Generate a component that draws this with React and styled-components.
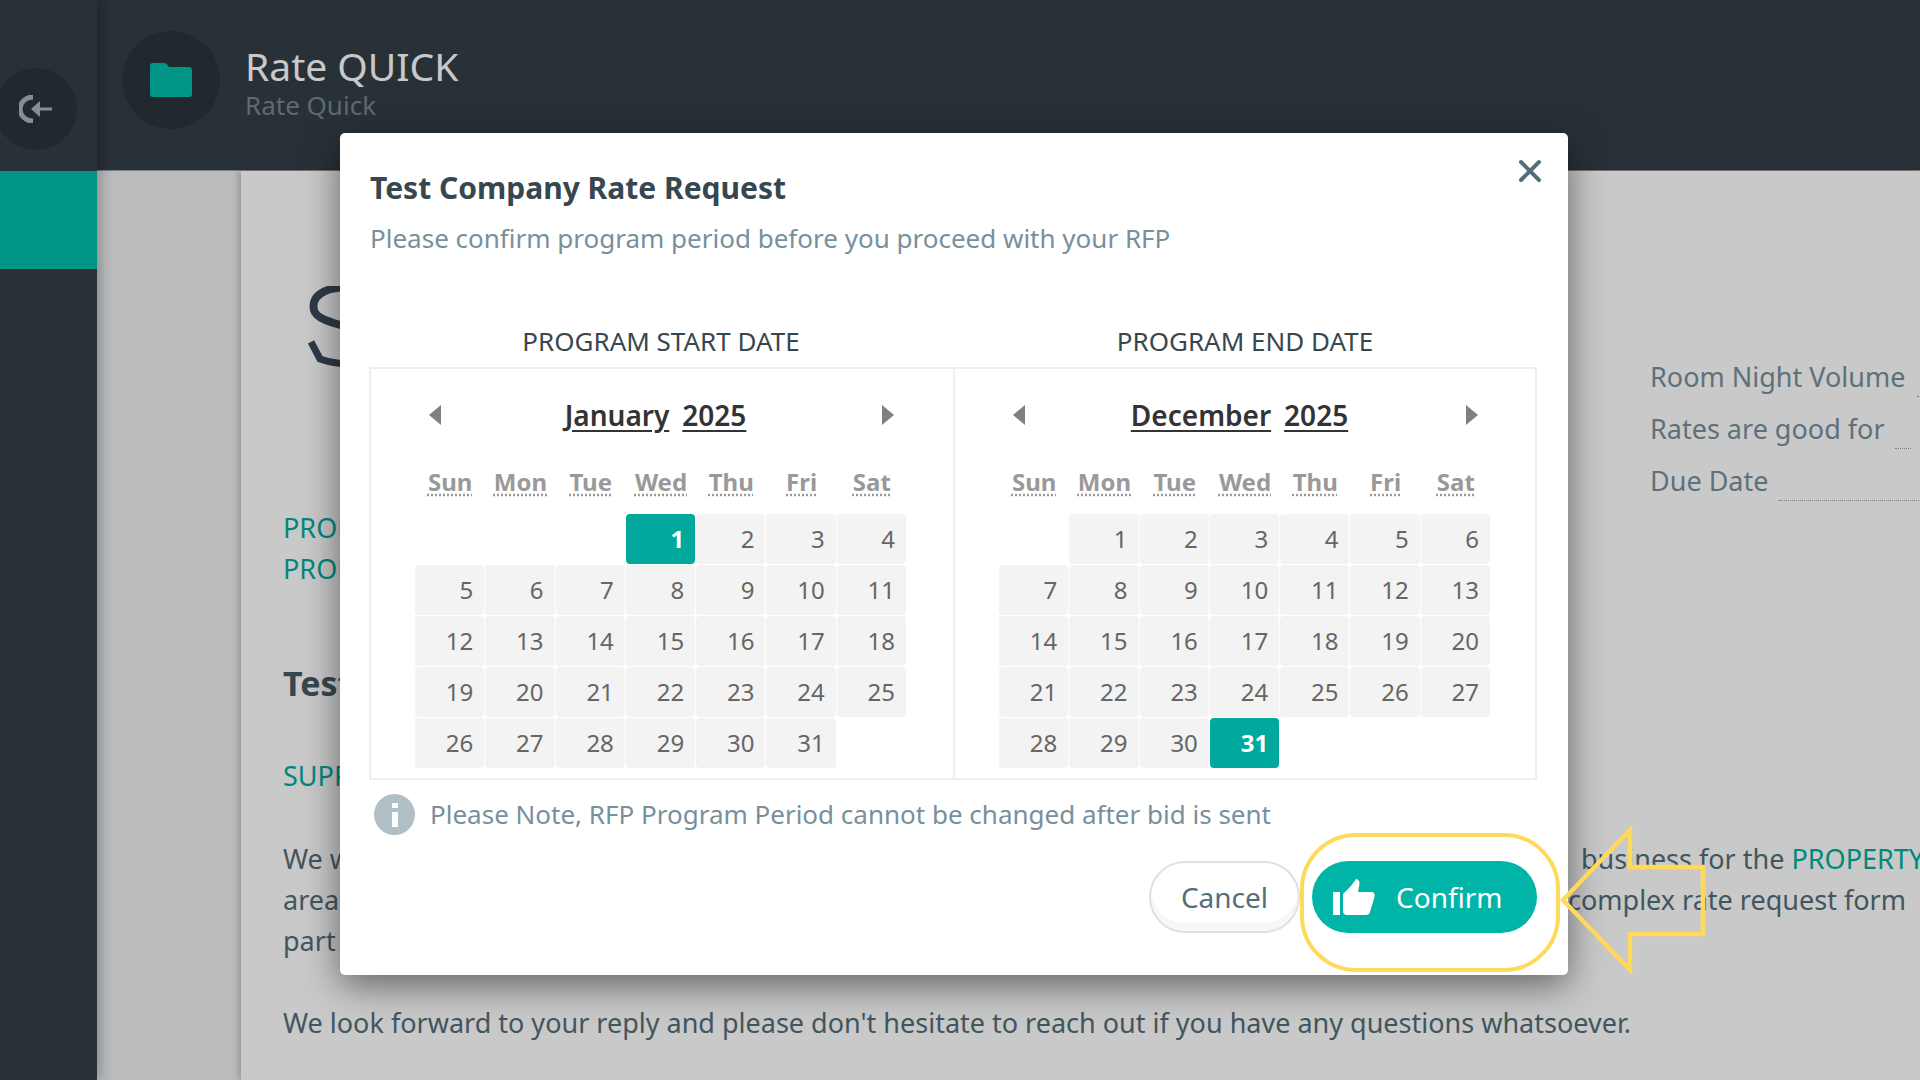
import React from 'react';
import styled, { createGlobalStyle } from 'styled-components';
import { X } from 'lucide-react';

const GlobalStyle = createGlobalStyle`
  html, body {
    margin: 0;
    padding: 0;
    background: #fff;
    font-family: "Noto Sans", "Open Sans", sans-serif;
  }
  * {
    box-sizing: border-box;
  }
`;

const Page = styled.div`
  position: relative;
  display: flex;
  width: 1920px;
  height: 1080px;
  overflow: hidden;
`;

const Sidebar = styled.aside`
  width: 97px;
  flex: none;
  background: #353f47;
  box-shadow: 4px 0 12px rgba(0, 0, 0, 0.25);
  z-index: 2;
`;

const BackZone = styled.div`
  height: 171px;
  padding: 68px 0 0 0;
`;

const BackButton = styled.div`
  width: 82px;
  height: 82px;
  margin-left: -5px;
  border-radius: 50%;
  background: #2c353b;
  display: flex;
  align-items: center;
  justify-content: center;
`;

const SideActive = styled.div`
  height: 98px;
  background: #00bdac;
`;

const Main = styled.div`
  flex: 1;
  display: flex;
  flex-direction: column;
  min-width: 0;
`;

const Header = styled.header`
  height: 171px;
  flex: none;
  background: #353f47;
  display: flex;
  padding: 31px 0 0 25px;
  border-bottom: 1px solid #9aa0a4;
`;

const FolderBadge = styled.div`
  width: 98px;
  height: 98px;
  border-radius: 50%;
  background: #2c353b;
  display: flex;
  align-items: center;
  justify-content: center;
`;

const HeaderText = styled.div`
  margin-left: 25px;
  padding-top: 12px;
`;

const HeaderTitle = styled.div`
  font-size: 39px;
  line-height: 46px;
  color: #ffffff;
`;

const HeaderSub = styled.div`
  font-size: 26px;
  line-height: 32px;
  color: #78878f;
`;

const Body = styled.div`
  flex: 1;
  display: flex;
  min-height: 0;
`;

const Gutter = styled.div`
  width: 144px;
  flex: none;
  background: #eceeef;
`;

const Paper = styled.div`
  flex: 1;
  background: #fff;
  box-shadow: -3px 0 6px rgba(0, 0, 0, 0.18);
  padding-left: 42px;
  min-width: 0;
  overflow: hidden;
`;

const TopGrid = styled.div`
  display: grid;
  grid-template-columns: 1367px 1fr;
`;

const LeftCol = styled.div`
  padding-top: 115px;
`;

const LogoMark = styled.svg`
  display: block;
  margin-left: 25px;
  width: 70px;
  height: 81px;
`;

const TealLine = styled.div`
  font-size: 27px;
  line-height: 41px;
  color: #00ad9c;
  white-space: nowrap;
  margin-top: ${({ $top }) => $top || 0}px;
`;

const InfoCol = styled.div`
  padding-top: 180px;
`;

const InfoRow = styled.div`
  display: flex;
  height: 52px;
  font-size: 27px;
  line-height: 52px;
  color: #78909c;
  white-space: nowrap;
`;

const DottedField = styled.span`
  display: block;
  height: 46px;
  border-bottom: 1px dotted #9e9e9e;
  margin-left: ${({ $gap }) => $gap}px;
  width: ${({ $width }) => $width}px;
  flex: none;
  margin-right: 10px;
`;

const BigHeading = styled.div`
  font-size: 34px;
  font-weight: 700;
  line-height: 44px;
  color: #455a64;
  margin-top: 72px;
  white-space: nowrap;
`;

const TextBlock = styled.div`
  margin-top: 42px;
  font-size: 27px;
  line-height: 41px;
  color: #546e7a;
`;

const TextLine = styled.div`
  display: grid;
  grid-template-columns: ${({ $split }) => $split}px 1fr;
  white-space: nowrap;
`;

const Accent = styled.span`
  color: #00ad9c;
`;

const Closing = styled.div`
  margin-top: 41px;
  font-size: 27px;
  line-height: 41px;
  color: #546e7a;
  white-space: nowrap;
`;

const Overlay = styled.div`
  position: absolute;
  inset: 0;
  background: rgba(0, 0, 0, 0.21);
  z-index: 5;
`;

const Modal = styled.div`
  position: absolute;
  left: 340px;
  top: 133px;
  width: 1228px;
  height: 842px;
  padding: 35px 31px 0 29px;
  background: #fff;
  border-radius: 5px;
  box-shadow: 0 10px 36px rgba(0, 0, 0, 0.5);
  z-index: 6;
`;

const CloseButton = styled.div`
  position: absolute;
  top: 20px;
  right: 20px;
  color: #546e7a;
  display: flex;
`;

const ModalTitle = styled.div`
  padding-left: 1px;
  font-size: 30px;
  font-weight: 700;
  line-height: 40px;
  color: #37474f;
`;

const ModalSub = styled.div`
  padding-left: 1px;
  margin-top: 12px;
  font-size: 26px;
  line-height: 36px;
  color: #78909c;
`;

const LabelRow = styled.div`
  display: grid;
  grid-template-columns: 584px 1fr;
  margin-top: 70px;
  margin-bottom: 11px;
`;

const Label = styled.div`
  text-align: center;
  font-size: 26px;
  line-height: 30px;
  color: #37474f;
`;

const CalendarBox = styled.div`
  display: grid;
  grid-template-columns: 582px 1fr;
  height: 413px;
  border: 2px solid #eceff1;
`;

const CalendarPane = styled.div`
  padding: 26px 0 0 0;
  border-left: ${({ $divider }) => ($divider ? '2px solid #eceff1' : 'none')};
`;

const CalNav = styled.div`
  width: 465px;
  height: 40px;
  margin-left: 58px;
  display: flex;
  align-items: center;
  justify-content: space-between;
`;

const Triangle = styled.span`
  width: 0;
  height: 0;
  border-top: 10px solid transparent;
  border-bottom: 10px solid transparent;
  border-left: ${({ $right }) => ($right ? '12px solid #808080' : 'none')};
  border-right: ${({ $right }) => ($right ? 'none' : '12px solid #808080')};
`;

const MonthTitle = styled.div`
  display: flex;
  gap: 13px;
  margin-right: 12px;
  font-size: 28px;
  font-weight: 600;
  line-height: 40px;
  color: #333;
  text-decoration: underline;
  text-underline-offset: 4px;
`;

const CalGrid = styled.div`
  width: 492px;
  margin: 28px 0 0 44px;
  display: grid;
  grid-template-columns: repeat(7, 1fr);
  grid-auto-rows: 51px;
`;

const WeekHead = styled.div`
  height: 44px;
  text-align: center;
  font-size: 24px;
  font-weight: 700;
  line-height: 38px;
  color: #999;
  text-decoration: underline dotted;
  text-underline-offset: 3px;
`;

const DayCell = styled.div`
  margin: 0 1px 1px 0;
  padding-right: 11px;
  text-align: right;
  font-size: 24px;
  line-height: 50px;
  border-radius: 4px;
  background: ${({ $selected, $empty }) =>
    $selected ? '#00a99b' : $empty ? 'transparent' : '#f3f3f3'};
  color: ${({ $selected }) => ($selected ? '#fff' : '#666')};
  font-weight: ${({ $selected }) => ($selected ? 700 : 400)};
`;

const NoteRow = styled.div`
  display: flex;
  align-items: center;
  gap: 15px;
  margin: 14px 0 0 5px;
  font-size: 26px;
  line-height: 41px;
  color: #78909c;
`;

const InfoDot = styled.div`
  width: 41px;
  height: 41px;
  border-radius: 50%;
  background: #b0bec5;
  display: flex;
  align-items: center;
  justify-content: center;
`;

const Actions = styled.div`
  display: flex;
  justify-content: flex-end;
  gap: 12px;
  margin-top: 26px;
`;

const CancelButton = styled.div`
  width: 151px;
  height: 72px;
  border: 2px solid #e0e0e0;
  border-radius: 36px;
  background: #fff;
  box-shadow: inset 0 -8px 0 #f5f7f8;
  display: flex;
  align-items: center;
  justify-content: center;
  font-size: 28px;
  color: #546e7a;
`;

const ConfirmButton = styled.div`
  width: 225px;
  height: 72px;
  border-radius: 36px;
  background: #00b5a7;
  display: flex;
  align-items: center;
  padding-left: 21px;
  gap: 21px;
  font-size: 28px;
  color: #fff;
`;

const Highlight = styled.div`
  position: absolute;
  left: 1300px;
  top: 833px;
  width: 260px;
  height: 139px;
  border: 4px solid #ffd95a;
  border-radius: 56px;
  z-index: 7;
`;

const CalloutArrow = styled.svg`
  position: absolute;
  left: 1555px;
  top: 820px;
  width: 155px;
  height: 160px;
  z-index: 7;
`;

const WEEK = ['Sun', 'Mon', 'Tue', 'Wed', 'Thu', 'Fri', 'Sat'];

const Calendar = ({ month, year, offset, days, selected, divider }) => {
  const blanks = Array.from({ length: offset });
  const dates = Array.from({ length: days }, (_, i) => i + 1);
  return (
    <CalendarPane $divider={divider}>
      <CalNav>
        <Triangle />
        <MonthTitle>
          <span>{month}</span>
          <span>{year}</span>
        </MonthTitle>
        <Triangle $right />
      </CalNav>
      <CalGrid>
        {WEEK.map((d) => (
          <WeekHead key={d}>{d}</WeekHead>
        ))}
        {blanks.map((_, i) => (
          <DayCell key={'b' + i} $empty />
        ))}
        {dates.map((d) => (
          <DayCell key={d} $selected={d === selected}>
            {d}
          </DayCell>
        ))}
      </CalGrid>
    </CalendarPane>
  );
};

const App = () => {
  return (
    <Page>
      <GlobalStyle />
      <Sidebar>
        <BackZone>
          <BackButton>
            <svg width="34" height="28" viewBox="0 0 34 28" fill="none">
              <path d="M14 2 A13 12 0 0 0 14 26" stroke="#aab5bb" strokeWidth="5" />
              <path d="M33 12.5 H21 V6 L12 14 L21 22 V15.5 H33 Z" fill="#aab5bb" />
            </svg>
          </BackButton>
        </BackZone>
        <SideActive />
      </Sidebar>
      <Main>
        <Header>
          <FolderBadge>
            <svg width="42" height="34" viewBox="0 0 42 34">
              <path
                d="M3 0 H14 Q16 0 17.5 2 L19 4 H39 Q42 4 42 7 V31 Q42 34 39 34 H3 Q0 34 0 31 V3 Q0 0 3 0 Z"
                fill="#00bdac"
              />
            </svg>
          </FolderBadge>
          <HeaderText>
            <HeaderTitle>Rate QUICK</HeaderTitle>
            <HeaderSub>Rate Quick</HeaderSub>
          </HeaderText>
        </Header>
        <Body>
          <Gutter />
          <Paper>
            <TopGrid>
              <LeftCol>
                <LogoMark viewBox="0 0 70 81" fill="none">
                  <path d="M50 3 C22 -2 2 8 6 24 C8 34 30 38 50 44" stroke="#3c4a5c" strokeWidth="8" />
                  <path d="M3 56 L12 73 C26 78 40 79 60 78" stroke="#3c4a5c" strokeWidth="7" />
                </LogoMark>
                <TealLine $top={140}>PROPERTY NAME</TealLine>
                <TealLine>PROPERTY CODE</TealLine>
                <BigHeading>Test Company Rate Request</BigHeading>
                <TealLine $top={50}>SUPPLIER</TealLine>
              </LeftCol>
              <InfoCol>
                <InfoRow>
                  Room Night Volume
                  <DottedField $gap={12} $width={60} />
                </InfoRow>
                <InfoRow>
                  Rates are good for
                  <DottedField $gap={10} $width={16} />0
                </InfoRow>
                <InfoRow>
                  Due Date
                  <DottedField $gap={11} $width={200} />
                </InfoRow>
              </InfoCol>
            </TopGrid>
            <TextBlock>
              <TextLine $split={1298}>
                <span>We would like to invite your company to bid on our</span>
                <span>
                  business for the <Accent>PROPERTY</Accent>
                </span>
              </TextLine>
              <TextLine $split={1285}>
                <span>area and have made it simple with this</span>
                <span>complex rate request form</span>
              </TextLine>
              <TextLine $split={1285}>
                <span>part of our program.</span>
                <span />
              </TextLine>
            </TextBlock>
            <Closing>
              We look forward to your reply and please don't hesitate to reach out if you have any
              questions whatsoever.
            </Closing>
          </Paper>
        </Body>
      </Main>
      <Overlay />
      <Modal>
        <CloseButton>
          <X size={36} strokeWidth={2.6} />
        </CloseButton>
        <ModalTitle>Test Company Rate Request</ModalTitle>
        <ModalSub>Please confirm program period before you proceed with your RFP</ModalSub>
        <LabelRow>
          <Label>PROGRAM START DATE</Label>
          <Label>PROGRAM END DATE</Label>
        </LabelRow>
        <CalendarBox>
          <Calendar month="January" year="2025" offset={3} days={31} selected={1} />
          <Calendar month="December" year="2025" offset={1} days={31} selected={31} divider />
        </CalendarBox>
        <NoteRow>
          <InfoDot>
            <svg width="6" height="24" viewBox="0 0 6 24" fill="#fff">
              <rect x="0" y="0" width="6" height="5" />
              <rect x="0" y="9" width="6" height="15" />
            </svg>
          </InfoDot>
          Please Note, RFP Program Period cannot be changed after bid is sent
        </NoteRow>
        <Actions>
          <CancelButton>Cancel</CancelButton>
          <ConfirmButton>
            <svg width="42" height="36" viewBox="0 0 42 36" fill="#fff">
              <rect x="0" y="13" width="7" height="23" />
              <path d="M10 15 L18 7 L23 0 Q27 1 26.5 5 L25 13 H38 Q42.5 13 41.5 18 L37 33 Q36 36 33 36 H14 Q10 36 10 32 Z" />
            </svg>
            Confirm
          </ConfirmButton>
        </Actions>
      </Modal>
      <Highlight />
      <CalloutArrow viewBox="0 0 155 160" fill="none">
        <path
          d="M8 80 L75 10 V47 H148 V114 H75 V150 Z"
          stroke="#ffd95a"
          strokeWidth="4.5"
        />
      </CalloutArrow>
    </Page>
  );
};

export default App;
